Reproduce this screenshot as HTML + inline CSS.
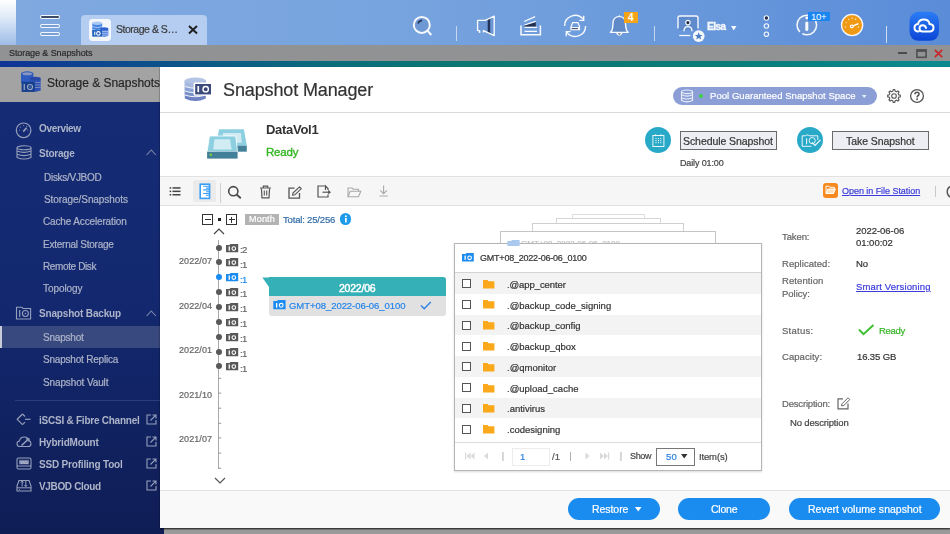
<!DOCTYPE html>
<html><head><meta charset="utf-8">
<style>
*{margin:0;padding:0;box-sizing:border-box}
html,body{width:950px;height:534px;overflow:hidden;font-family:"Liberation Sans",sans-serif;background:#999999;position:relative}
.a{position:absolute}
.tx{position:absolute;white-space:nowrap;will-change:transform;-webkit-text-stroke:0.2px currentColor}
svg{position:absolute;overflow:visible}
</style></head>
<body>
<!-- top bar -->
<div class="a" style="left:0;top:0;width:950px;height:45px;background:linear-gradient(90deg,#80a9e0 0%,#76a3de 45%,#5a8cd8 100%)"></div>
<div class="a" style="left:0;top:0;width:16px;height:45px;background:linear-gradient(180deg,#ffffff 0%,#e3ecf8 35%,#9ebde8 100%)"></div>
<!-- hamburger -->
<div class="a" style="left:40.5px;top:16.1px;width:18px;height:2.2px;border-radius:1.5px;background:#3c4a66;box-shadow:0 0 0 1px #f4f7fc"></div>
<div class="a" style="left:40.5px;top:24.5px;width:18px;height:2.2px;border-radius:1.5px;background:#7aa0d8;box-shadow:0 0 0 1px #f4f7fc"></div>
<div class="a" style="left:40.5px;top:32.9px;width:18px;height:2.2px;border-radius:1.5px;background:#7aa0d8;box-shadow:0 0 0 1px #f4f7fc"></div>
<!-- tab -->
<div class="a" style="left:81px;top:15px;width:126px;height:30px;border-radius:4px 4px 0 0;background:#b4cdf0"></div>
<div class="a" style="left:89px;top:19px;width:22px;height:22px;border-radius:4px;background:#f4f7fb"></div>
<!-- window title bar -->
<div class="a" style="left:0;top:45px;width:950px;height:16px;background:#909294"></div>
<div class="a" style="left:0;top:61px;width:950px;height:6px;background:linear-gradient(90deg,#0f3396 0%,#0c4f8c 15%,#0b6d7c 35%,#0c7870 50%,#0a7c78 75%,#0a8a90 100%)"></div>
<!-- sidebar -->
<div class="a" style="left:0;top:67px;width:164px;height:467px;background:linear-gradient(180deg,#152c76 0%,#13286f 50%,#0f1d55 100%)"></div>
<div class="a" style="left:0;top:67px;width:160px;height:35px;background:#a3a3a3"></div>
<div class="a" style="left:0;top:326px;width:160px;height:22px;background:#38497f"></div>
<div class="a" style="left:0;top:326px;width:2px;height:22px;background:#c8ccd8"></div>
<div class="a" style="left:15px;top:400px;width:145px;height:1px;background:#2a3d7e"></div>
<!-- below modal gray -->
<div class="a" style="left:164px;top:527px;width:786px;height:7px;background:linear-gradient(180deg,#4a4a4a 0px,#7a7a7a 1.5px,#9a9a9a 3px)"></div>
<!-- modal -->
<div class="a" style="left:160px;top:67px;width:790px;height:460.5px;background:#ffffff;box-shadow:0 1px 1.5px rgba(0,0,0,.7)"></div>
<div class="a" style="left:160px;top:112px;width:790px;height:1px;background:#d9d9d9"></div>
<!-- pill -->
<div class="a" style="left:673px;top:87px;width:204px;height:18px;border-radius:9px;background:#8c9ed6"></div>
<div class="a" style="left:698.5px;top:94px;width:4px;height:4px;border-radius:2px;background:#3ecf4a"></div>
<!-- schedule/take buttons -->
<div class="a" style="left:645px;top:127px;width:26px;height:26px;border-radius:13px;background:#28a9c8"></div>
<div class="a" style="left:679.5px;top:131px;width:97px;height:18.6px;background:#eceef3;border:1px solid #6a6a6a"></div>
<div class="a" style="left:797px;top:127px;width:26px;height:26px;border-radius:13px;background:#28a9c8"></div>
<div class="a" style="left:832px;top:131px;width:96.5px;height:18.6px;background:#eceef3;border:1px solid #6a6a6a"></div>
<!-- toolbar -->
<div class="a" style="left:160px;top:176px;width:790px;height:30px;background:#f6f6f6;border-top:1px solid #e2e2e2;border-bottom:1px solid #e2e2e2"></div>
<div class="a" style="left:192.7px;top:180px;width:23px;height:22.4px;border-radius:2px;background:#ebebeb"></div>
<div class="a" style="left:220px;top:183px;width:1px;height:20px;background:#cfcfcf"></div>
<div class="a" style="left:823px;top:182.5px;width:15px;height:15px;border-radius:3px;background:#f7891f"></div>
<div class="a" style="left:934.5px;top:186px;width:1px;height:11px;background:#c8c8c8"></div>
<!-- timeline header -->
<div class="a" style="left:202px;top:214px;width:11px;height:11px;border:1px solid #333"></div>
<div class="a" style="left:204.5px;top:219px;width:6px;height:1px;background:#333"></div>
<div class="a" style="left:218px;top:218px;width:3px;height:3px;background:#222"></div>
<div class="a" style="left:226px;top:214px;width:11px;height:11px;border:1px solid #333"></div>
<div class="a" style="left:228.5px;top:219px;width:6px;height:1px;background:#333"></div>
<div class="a" style="left:231px;top:216.5px;width:1px;height:6px;background:#333"></div>
<div class="a" style="left:245px;top:213.5px;width:33.5px;height:11px;background:#b3b3b3"></div>
<div class="a" style="left:339.5px;top:213.3px;width:11.5px;height:11.5px;border-radius:6px;background:#1c9bea"></div>
<!-- timeline line -->
<div class="a" style="left:218px;top:240px;width:1.3px;height:229px;background:#a9a9a9"></div>
<!-- callout -->
<div class="a" style="left:268.7px;top:277.4px;width:177.5px;height:38.3px;border-radius:0 3px 3px 3px;background:#e1e1e1;overflow:hidden"><div class="a" style="left:0;top:0;width:178px;height:18.5px;background:#34b0b6"></div></div>
<svg style="left:262px;top:277px" width="8" height="11"><path d="M0.4 0.4 H7 V10 Z" fill="#34b0b6"/></svg>
<!-- popup stacked cards -->
<div class="a" style="left:572px;top:214.4px;width:73px;height:40px;border:1px solid #dedede;background:#fff"></div>
<div class="a" style="left:555.5px;top:218.2px;width:105px;height:40px;border:1px solid #d6d6d6;background:#fff"></div>
<div class="a" style="left:532px;top:223px;width:152px;height:40px;border:1px solid #cfcfcf;background:#fff"></div>
<div class="a" style="left:499.5px;top:231px;width:216px;height:40px;border:1px solid #c4c4c4;background:#fff"></div>
<!-- popup main -->
<div class="a" style="left:453.7px;top:243.2px;width:308.5px;height:228px;border:1px solid #b5b5b5;background:#fff;box-shadow:0 1px 2px rgba(0,0,0,.15)"></div>
<div class="a" style="left:454.7px;top:272.3px;width:306.5px;height:1px;background:#d4d4d4"></div>
<div class="a" style="left:454.7px;top:273.3px;width:306.5px;height:20.4px;background:#f3f3f3"></div>
<div class="a" style="left:454.7px;top:314.5px;width:306.5px;height:20.8px;background:#f3f3f3"></div>
<div class="a" style="left:454.7px;top:356.1px;width:306.5px;height:20.8px;background:#f3f3f3"></div>
<div class="a" style="left:454.7px;top:397.6px;width:306.5px;height:20.8px;background:#f3f3f3"></div>
<div class="a" style="left:454.7px;top:442.3px;width:306.5px;height:1px;background:#dcdcdc"></div>
<!-- pager input/select -->
<div class="a" style="left:511.6px;top:447.7px;width:38.5px;height:18px;border:1px solid #ececec;background:#fff"></div>
<div class="a" style="left:656px;top:447.5px;width:39px;height:18.5px;border:1px solid #777;background:#fff"></div>
<!-- footer -->
<div class="a" style="left:160px;top:490px;width:790px;height:37.5px;background:#f9f9f9;border-top:1px solid #e3e3e3"></div>
<div class="a" style="left:567.5px;top:497.7px;width:92.3px;height:22.5px;border-radius:11.25px;background:#1a8cf0"></div>
<div class="a" style="left:678.2px;top:497.7px;width:92px;height:22.5px;border-radius:11.25px;background:#1a8cf0"></div>
<div class="a" style="left:788.7px;top:497.7px;width:151px;height:22.5px;border-radius:11.25px;background:#1a8cf0"></div>
<!-- tab app icon -->
<svg style="left:88.7px;top:18.7px" width="22" height="22" viewBox="0 0 22 22">
<rect x="0" y="0" width="22" height="22" rx="4" fill="#f3f6fb"/>
<path d="M3.3 4.2 V14 H13.2 V4.2 Z" fill="#4584e2"/>
<ellipse cx="8.25" cy="4.2" rx="4.95" ry="1.7" fill="#a9c8f3"/>
<path d="M3.3 7.6 Q8.25 9.6 13.2 7.6 M3.3 10.5 Q8.25 12.5 13.2 10.5" stroke="#c9dcf7" stroke-width="0.7" fill="none"/>
<path d="M11.2 9.8 V16.8 Q15.25 18.9 19.3 16.8 V9.8 Z" fill="#3a6fd9"/>
<ellipse cx="15.25" cy="9.8" rx="4.05" ry="1.5" fill="#2f5fcc"/>
<path d="M12.8 12.3 H19.3 M12.8 14.2 H19.3 M12.8 16.1 H19.3" stroke="#d0def8" stroke-width="0.8"/>
<rect x="3.3" y="11.2" width="9.6" height="6.4" fill="#1b5db9"/>
<rect x="5.2" y="12.6" width="1.1" height="3.6" fill="#fff"/>
<circle cx="9.4" cy="14.4" r="1.75" stroke="#fff" stroke-width="1.1" fill="none"/>
</svg>
<!-- tab close X -->
<svg style="left:187.5px;top:25px" width="10" height="9"><path d="M1 1 L9 8.5 M9 1 L1 8.5" stroke="#1e1e1e" stroke-width="1.9"/></svg>
<!-- search -->
<svg style="left:411px;top:14px" width="24" height="24"><circle cx="10.8" cy="10.9" r="8" stroke="#f6f9fd" stroke-width="2" fill="#6e98d4"/><path d="M16.5 16.6 L20.3 21" stroke="#f6f9fd" stroke-width="2"/><path d="M7 9.5 Q8 6.8 11 6.4" stroke="#24324e" stroke-width="1.6" fill="none"/></svg>
<!-- dividers -->
<div class="a" style="left:455.5px;top:26px;width:1px;height:15px;background:#c5d6ef"></div>
<div class="a" style="left:653.5px;top:26px;width:1px;height:15px;background:#c5d6ef"></div>
<div class="a" style="left:886px;top:26px;width:1px;height:17px;background:#d0def2"></div>
<!-- megaphone -->
<svg style="left:476px;top:15px" width="20" height="22"><path d="M1.6 5.4 H9.2 L18.2 1.2 V20.6 L7.5 15.6 H1.6 Z" fill="#6d98d6"/><path d="M11.7 3.6 L14.2 2.5 V19.2 L11.7 18 Z" fill="#23345a"/><path d="M3.6 18 V15.6 H1.6 V5.4 H9.2 L18.2 1.2 V20.6 L7.5 15.6 V17.6" stroke="#f6f9fd" stroke-width="1.4" fill="none" stroke-linejoin="round"/></svg>
<!-- tray -->
<svg style="left:519px;top:15px" width="23" height="22"><path d="M5.5 10.4 L16.8 6.6 V11.8 H5.5 Z" fill="#22314f"/><path d="M5.1 6.5 L16.1 1.6 M5.5 10 L16.8 6.3 M5.5 12.4 H18 M5.5 16.3 H18" stroke="#f6f9fd" stroke-width="1.3" fill="none"/><path d="M2 10.4 V19.7 H21.4 V10.4" stroke="#f6f9fd" stroke-width="1.5" fill="none"/></svg>
<!-- sync -->
<svg style="left:563px;top:14px" width="25" height="24"><path d="M1.6 12 A10.5 10.5 0 0 1 20.1 5.1" stroke="#f6f9fd" stroke-width="1.4" fill="none"/><path d="M20.7 1.8 V6.4 H16.4" stroke="#f6f9fd" stroke-width="1.4" fill="none"/><path d="M22.6 12 A10.5 10.5 0 0 1 3.7 18.2" stroke="#f6f9fd" stroke-width="1.4" fill="none"/><path d="M3.3 22.2 V17.6 H7.6" stroke="#f6f9fd" stroke-width="1.4" fill="none"/><path d="M7.9 13.3 L9.6 8.6 H15 L16.7 13.3" stroke="#f6f9fd" stroke-width="1.3" fill="none"/><rect x="7.3" y="13" width="9.8" height="3.3" fill="#f6f9fd"/><rect x="8.6" y="14.2" width="6.3" height="0.9" fill="#24324f"/></svg>
<!-- bell -->
<svg style="left:609px;top:14px" width="22" height="24"><path d="M1.5 18.4 Q3.6 16.6 3.8 12 L4 8.6 Q4.5 2.9 10.3 2.4 Q16 2.9 16.5 8.6 L16.7 12 Q17 16.6 19.2 18.4 Z" stroke="#f6f9fd" stroke-width="1.4" fill="#5f89c7" stroke-linejoin="round"/><path d="M9.2 2.6 L10.3 0.9 L11.4 2.6 Z" fill="#f6f9fd"/><path d="M7.5 18.9 Q10.3 23.6 13.1 18.9 Z" stroke="#f6f9fd" stroke-width="1.1" fill="#2a3a5a"/></svg>
<div class="a" style="left:623.6px;top:12px;width:14.4px;height:10.7px;background:#f5a418;color:#fff;font-size:10px;line-height:11px;text-align:center;font-weight:bold">4</div>
<!-- user -->
<svg style="left:676px;top:14px" width="30" height="30"><rect x="2" y="2" width="20" height="14" rx="2" fill="#5f8acb"/><path d="M2 14.6 V4 Q2 2 4 2 H20 Q22 2 22 4 V14.6" stroke="#f6f9fd" stroke-width="1.4" fill="none"/><circle cx="11.9" cy="8.6" r="2.2" stroke="#f6f9fd" stroke-width="1.2" fill="#1c2a48"/><path d="M8 17.3 Q8 12.6 12 12.6 Q16 12.6 16 17.3" stroke="#f6f9fd" stroke-width="1.3" fill="none"/><path d="M3.2 21.5 H14.3" stroke="#f6f9fd" stroke-width="1.3"/><circle cx="22.7" cy="22.1" r="5.9" fill="#f6f9fd"/><path d="M22.7 18.3 L23.8 21 L26.6 21.1 L24.4 22.8 L25.2 25.6 L22.7 24 L20.2 25.6 L21 22.8 L18.8 21.1 L21.6 21 Z" fill="#4d7fc6"/></svg>
<svg style="left:730.5px;top:25.5px" width="6" height="5"><path d="M0 0 H5.5 L2.75 4.5 Z" fill="#f6f9fd"/></svg>
<!-- 3 dots -->
<svg style="left:762px;top:14px" width="9" height="25"><circle cx="4.4" cy="4" r="2.2" fill="#1c2a48" stroke="#f6f9fd" stroke-width="1.1"/><circle cx="4.4" cy="12" r="2.2" fill="none" stroke="#f6f9fd" stroke-width="1.1"/><circle cx="4.4" cy="20.2" r="2.2" fill="none" stroke="#f6f9fd" stroke-width="1.1"/></svg>
<!-- info w/ 10+ -->
<svg style="left:795px;top:13px" width="24" height="24"><circle cx="11.8" cy="12" r="9.8" stroke="#f6f9fd" stroke-width="1.5" fill="#6a94d3" stroke-dasharray="20 3 40 3 40"/><rect x="10.3" y="8.5" width="3" height="9.5" rx="1.5" fill="#f6f9fd"/><circle cx="11.8" cy="5" r="1.4" fill="#f6f9fd"/></svg>
<div class="a" style="left:807.7px;top:12.2px;width:22px;height:9px;background:#1b86ef;color:#fff;font-size:9.5px;line-height:9px;text-align:center;letter-spacing:-0.3px">10+</div>
<!-- orange dashboard -->
<svg style="left:840px;top:13px" width="25" height="25"><circle cx="12.1" cy="12" r="10.6" fill="#f09a14" stroke="#f6f9fd" stroke-width="1.3"/><path d="M11.8 13.4 L18.5 10.6" stroke="#fff" stroke-width="1.5"/><circle cx="11.8" cy="13.4" r="1.9" fill="#fff"/><circle cx="11.8" cy="13.4" r="0.6" fill="#b56a00"/><g fill="#fde9c0"><circle cx="5.5" cy="14" r="0.7"/><circle cx="6.2" cy="9.6" r="0.7"/><circle cx="8.8" cy="6.4" r="0.7"/><circle cx="12.2" cy="5.2" r="0.7"/><circle cx="15.6" cy="6.3" r="0.7"/><circle cx="18.4" cy="14" r="0.7"/></g></svg>
<!-- cloud app -->
<svg style="left:909px;top:10.7px" width="30" height="30"><defs><linearGradient id="cg" x1="0" y1="0" x2="0" y2="1"><stop offset="0" stop-color="#2a7cf5"/><stop offset="1" stop-color="#0b45d6"/></linearGradient></defs><rect x="0.5" y="0.8" width="29.5" height="29" rx="9" fill="url(#cg)"/><path d="M9.5 20.5 Q5.5 20.5 5.5 16.8 Q5.5 13.3 9 13 Q10 8.5 14.8 8.5 Q19.8 8.5 20.6 13 Q24.5 13.2 24.5 16.8 Q24.5 20.5 20.5 20.5 H13.5 Q10.5 20.5 10.5 17.3 Q10.5 14.3 13.8 14.3 Q16.5 14.3 17 17" stroke="#fff" stroke-width="2" fill="none" stroke-linecap="round"/></svg>
<!-- window controls -->
<div class="a" style="left:898px;top:52px;width:9px;height:2px;background:#4b4b4b"></div>
<svg style="left:915.5px;top:48.5px" width="11" height="9"><rect x="0.9" y="0.9" width="9.2" height="7.4" stroke="#505050" stroke-width="1.6" fill="none"/><rect x="0.9" y="0.9" width="9.2" height="2" fill="#505050"/></svg>
<svg style="left:934px;top:48.5px" width="9" height="9"><path d="M0.8 0.8 L8.2 8.2 M8.2 0.8 L0.8 8.2" stroke="#c8272b" stroke-width="1.7"/></svg>

<!-- sidebar header icon -->
<svg style="left:20px;top:70px" width="22" height="23" viewBox="0 0 22 23">
<path d="M1 3.5 V13 H13.4 V3.5 Z" fill="#2f5bc0"/>
<ellipse cx="7.2" cy="3.5" rx="6.2" ry="2.2" fill="#2f5bc0"/>
<ellipse cx="7.2" cy="3.8" rx="4.8" ry="1.5" fill="#8796bd"/>
<path d="M9.8 8.6 V20.5 Q15.25 22.8 20.7 20.5 V8.6 Z" fill="#2d52b4"/>
<ellipse cx="15.25" cy="8.6" rx="5.45" ry="1.9" fill="#2848a8"/>
<path d="M14.8 12.5 H20.7 M14.8 15 H20.7 M14.8 17.5 H20.7" stroke="#8996bd" stroke-width="0.8"/>
<rect x="1.6" y="11.8" width="13.2" height="10.1" fill="#163f8e"/>
<rect x="3.6" y="14" width="1.3" height="6" fill="#9aa4c0"/>
<circle cx="10" cy="17" r="2.5" stroke="#9aa4c0" stroke-width="1.2" fill="none"/>
<circle cx="10" cy="17" r="0.6" fill="#9aa4c0"/>
</svg>
<!-- sidebar icons -->
<svg style="left:14px;top:121px" width="20" height="20"><circle cx="9.6" cy="9.3" r="7.3" stroke="#97a0bb" stroke-width="1.2" fill="none"/><path d="M9.2 10.6 L12.6 6.8" stroke="#97a0bb" stroke-width="1.6"/><g fill="#97a0bb"><circle cx="5.5" cy="9" r="0.55"/><circle cx="6.6" cy="6" r="0.55"/><circle cx="9.6" cy="4.5" r="0.55"/><circle cx="12.7" cy="5.6" r="0.55"/><circle cx="13.8" cy="9" r="0.55"/></g></svg>
<svg style="left:15px;top:145px" width="18" height="16"><path d="M2 2.8 V12.4 Q9 15.5 16 12.4 V2.8" stroke="#97a0bb" stroke-width="1.1" fill="none"/><ellipse cx="9" cy="2.8" rx="7" ry="2" stroke="#97a0bb" stroke-width="1.1" fill="none"/><path d="M2 6 Q9 8.8 16 6 M2 9.2 Q9 12 16 9.2" stroke="#97a0bb" stroke-width="1.1" fill="none"/></svg>
<svg style="left:145.5px;top:149px" width="11" height="7"><path d="M0.6 6 L5.25 1 L9.9 6" stroke="#7d88a8" stroke-width="1.1" fill="none"/></svg>
<svg style="left:15px;top:306px" width="18" height="14"><path d="M1.5 1.2 H7 L8 2.5 H15.6 V13 H1.5 Z" stroke="#97a0bb" stroke-width="1.1" fill="none"/><path d="M4.7 4 V11" stroke="#97a0bb" stroke-width="1.2"/><circle cx="10.4" cy="7.5" r="3" stroke="#97a0bb" stroke-width="1.1" fill="none"/><circle cx="10.4" cy="7.5" r="0.8" fill="#97a0bb"/></svg>
<svg style="left:145.5px;top:310px" width="11" height="7"><path d="M0.6 6 L5.25 1 L9.9 6" stroke="#7d88a8" stroke-width="1.1" fill="none"/></svg>
<svg style="left:16px;top:413px" width="16" height="13"><path d="M6.5 1 L1.2 6.3 L6.5 11.6" stroke="#97a0bb" stroke-width="1.2" fill="none"/><path d="M6.5 1 L9 3.5 M6.5 11.6 L9 9.1" stroke="#97a0bb" stroke-width="1.2"/><path d="M9 6.3 H14.5" stroke="#97a0bb" stroke-width="1.2"/></svg>
<svg style="left:16px;top:435px" width="16" height="13"><path d="M4 11.5 Q1 11.5 1 8.7 Q1 6.3 3.5 6 Q4.2 2 8.2 2 Q12 2 12.8 5.5 Q15 6.2 15 8.7 Q15 11.5 12 11.5 Z" stroke="#97a0bb" stroke-width="1.1" fill="none"/><path d="M5.5 10.5 L12.5 4" stroke="#97a0bb" stroke-width="1.6"/><path d="M10 3.8 H13 V6.8" stroke="#97a0bb" stroke-width="1.2" fill="none"/></svg>
<svg style="left:16px;top:457px" width="16" height="13"><rect x="1" y="1" width="14" height="11" rx="1.5" stroke="#97a0bb" stroke-width="1.1" fill="none"/><rect x="3" y="2.8" width="10" height="4.5" fill="#6f7a9c"/><path d="M1 9 H15" stroke="#97a0bb" stroke-width="1"/><text x="8" y="6.6" font-size="4" text-anchor="middle" fill="#c5cbe0" font-family="Liberation Sans" font-weight="bold">SSD</text></svg>
<svg style="left:16px;top:479px" width="16" height="13"><path d="M1 7 L3 1.5 H13 L15 7 V12 H1 Z" stroke="#97a0bb" stroke-width="1.1" fill="none"/><path d="M1 8.8 H15" stroke="#97a0bb" stroke-width="1"/><path d="M6.2 7.5 V2 M4.8 3.5 L6.2 2 L7.6 3.5 M9.8 2 V7.5 M8.4 6 L9.8 7.5 L11.2 6" stroke="#97a0bb" stroke-width="1" fill="none"/><circle cx="3.5" cy="10.5" r="0.6" fill="#97a0bb"/></svg>
<svg style="left:145.5px;top:414px" width="11" height="11"><path d="M5 1 H1 V10 H10 V6" stroke="#97a0bb" stroke-width="1.1" fill="none"/><path d="M4.5 6.5 L9.8 1.2 M6.5 1 H10 V4.5" stroke="#97a0bb" stroke-width="1.1" fill="none"/></svg>
<svg style="left:145.5px;top:436px" width="11" height="11"><path d="M5 1 H1 V10 H10 V6" stroke="#97a0bb" stroke-width="1.1" fill="none"/><path d="M4.5 6.5 L9.8 1.2 M6.5 1 H10 V4.5" stroke="#97a0bb" stroke-width="1.1" fill="none"/></svg>
<svg style="left:145.5px;top:458px" width="11" height="11"><path d="M5 1 H1 V10 H10 V6" stroke="#97a0bb" stroke-width="1.1" fill="none"/><path d="M4.5 6.5 L9.8 1.2 M6.5 1 H10 V4.5" stroke="#97a0bb" stroke-width="1.1" fill="none"/></svg>
<svg style="left:145.5px;top:480px" width="11" height="11"><path d="M5 1 H1 V10 H10 V6" stroke="#97a0bb" stroke-width="1.1" fill="none"/><path d="M4.5 6.5 L9.8 1.2 M6.5 1 H10 V4.5" stroke="#97a0bb" stroke-width="1.1" fill="none"/></svg>

<!-- modal header icon -->
<svg style="left:184px;top:77px" width="30" height="26" viewBox="0 0 30 26">
<path d="M0.8 3.5 V21.5 Q11.3 26.5 21.8 21.5 V3.5 Z" fill="#6c80c2"/>
<path d="M0.8 3.5 V9.5 Q11.3 13 21.8 9.5 V3.5 Z" fill="#a6b9df"/>
<ellipse cx="11.3" cy="3.5" rx="10.5" ry="3" fill="#b4c4e4"/>
<path d="M0.8 9.5 V14 Q11.3 17.5 21.8 14 V9.5 Q11.3 13 0.8 9.5 Z" fill="#8aa2d5"/>
<path d="M0.8 14 V18 Q11.3 21.5 21.8 18 V14 Q11.3 17.5 0.8 14 Z" fill="#7990cb"/>
<path d="M0.8 9.5 Q11.3 13 21.8 9.5 M0.8 14 Q11.3 17.5 21.8 14 M0.8 18 Q11.3 21.5 21.8 18" stroke="#ffffff" stroke-width="0.9" fill="none"/>
<rect x="9.6" y="5.6" width="19" height="13.2" rx="1.5" fill="#ffffff"/>
<rect x="11.2" y="7" width="15.8" height="10.4" fill="#3a4a7c"/>
<rect x="13.4" y="9" width="1.7" height="6.2" fill="#fff"/>
<circle cx="21.7" cy="12.2" r="2.7" stroke="#fff" stroke-width="1.4" fill="none"/>
</svg>
<!-- disk icon -->
<svg style="left:206px;top:128px" width="42" height="32" viewBox="0 0 42 32">
<path d="M13.1 1.2 H37.9 L40.8 17.7 H10 Z" fill="#8ccfe0"/>
<path d="M17 5 H34.9 L35.8 14.7 H16 Z" fill="#d0ebf2"/>
<rect x="10" y="17.7" width="30.8" height="6" fill="#44829b"/>
<path d="M3.5 8 H29.7 L31.6 23.7 H1.1 Z" fill="#8ccfe0" stroke="#ffffff" stroke-width="0.8"/>
<path d="M8.4 11.3 H24 L25.6 21.4 H7.2 Z" fill="#d2ecf3"/>
<rect x="1.1" y="23.7" width="30.5" height="6.9" fill="#427f98"/>
<circle cx="4.8" cy="26.7" r="1.2" fill="#7ed22e"/>
</svg>
<!-- pill db + caret -->
<svg style="left:679.5px;top:88.5px" width="14" height="15"><path d="M1.5 2.8 V11.6 Q7 14.2 12.5 11.6 V2.8" stroke="#e9eefa" stroke-width="1.1" fill="none"/><ellipse cx="7" cy="2.8" rx="5.5" ry="1.8" stroke="#e9eefa" stroke-width="1.1" fill="none"/><path d="M1.5 5.8 Q7 8.4 12.5 5.8 M1.5 8.7 Q7 11.3 12.5 8.7" stroke="#e9eefa" stroke-width="1.1" fill="none"/></svg>
<svg style="left:861.5px;top:94.5px" width="5" height="4"><path d="M0 0 H4.4 L2.2 3 Z" fill="#eef2fb"/></svg>
<!-- gear -->
<svg style="left:886.2px;top:87.6px" width="16" height="16"><path d="M12.76 6.86 L14.34 7.15 L14.34 8.85 L12.76 9.14 L12.18 10.56 L13.09 11.88 L11.88 13.09 L10.56 12.18 L9.14 12.76 L8.85 14.34 L7.15 14.34 L6.86 12.76 L5.44 12.18 L4.12 13.09 L2.91 11.88 L3.82 10.56 L3.24 9.14 L1.66 8.85 L1.66 7.15 L3.24 6.86 L3.82 5.44 L2.91 4.12 L4.12 2.91 L5.44 3.82 L6.86 3.24 L7.15 1.66 L8.85 1.66 L9.14 3.24 L10.56 3.82 L11.88 2.91 L13.09 4.12 L12.18 5.44 Z" stroke="#5a5a5a" stroke-width="1.15" fill="none" stroke-linejoin="round"/><circle cx="8" cy="8" r="2.3" stroke="#5a5a5a" stroke-width="1.1" fill="none"/></svg>
<!-- help -->
<svg style="left:908.8px;top:87.6px" width="16" height="16"><circle cx="8" cy="8" r="6.4" stroke="#555" stroke-width="1.3" fill="none"/><path d="M6 6.2 Q6 4.2 8 4.2 Q10 4.2 10 6 Q10 7.1 8.9 7.7 Q8.1 8.2 8.1 9.4" stroke="#555" stroke-width="1.6" fill="none"/><circle cx="8.1" cy="11.3" r="0.95" fill="#555"/></svg>
<!-- calendar in circle -->
<svg style="left:652px;top:134px" width="13" height="13"><rect x="0.9" y="1.5" width="11" height="11" stroke="#eaf6fa" stroke-width="1" fill="none"/><path d="M3.6 0.3 V2.2 M9 0.3 V2.2" stroke="#eaf6fa" stroke-width="1"/><path d="M4 4 V10 M6.4 4 V10 M8.8 4 V10" stroke="#eaf6fa" stroke-width="1" stroke-dasharray="1.2 0.8"/></svg>
<!-- snapshot in circle -->
<svg style="left:801px;top:134px" width="21" height="14"><path d="M1.2 1.8 H4.5 L5.3 1 H7.5 L8.2 1.8 H16.8 V6.2" stroke="#eaf6fa" stroke-width="1" fill="none"/><path d="M1.2 1.8 V12.3 H10.5" stroke="#eaf6fa" stroke-width="1" fill="none"/><path d="M5.6 4.3 V10.3" stroke="#eaf6fa" stroke-width="1.1"/><circle cx="11.2" cy="6.6" r="3.1" stroke="#eaf6fa" stroke-width="1" fill="none"/><path d="M11 8.6 L14 11.4 L19.6 5.9" stroke="#eaf6fa" stroke-width="1.3" fill="none"/></svg>
<!-- toolbar icons -->
<svg style="left:169px;top:186px" width="13" height="11"><g fill="#444"><rect x="0.6" y="1.2" width="1.6" height="1.5"/><rect x="0.6" y="4.6" width="1.6" height="1.5"/><rect x="0.6" y="8" width="1.6" height="1.5"/><rect x="3.5" y="1.2" width="8" height="1.5"/><rect x="3.5" y="4.6" width="8" height="1.5"/><rect x="3.5" y="8" width="8" height="1.5"/></g></svg>
<svg style="left:199px;top:183px" width="12" height="17"><rect x="1.2" y="1.2" width="9.4" height="14.2" stroke="#3a9ff4" stroke-width="1.6" fill="#fff"/><path d="M4.2 3.3 H10 M7 5.1 H10 M4.2 6.9 H10 M7 8.7 H10 M4.2 10.5 H10 M7 12.3 H10" stroke="#3a9ff4" stroke-width="1.1"/></svg>
<svg style="left:227px;top:185px" width="15" height="14"><circle cx="6.3" cy="6.2" r="4.6" stroke="#4a4a4a" stroke-width="1.6" fill="none"/><path d="M9.6 9.5 L13.8 13.2" stroke="#4a4a4a" stroke-width="1.8"/></svg>
<svg style="left:258.5px;top:184.5px" width="13" height="14"><path d="M1 3 H12 M4.3 3 V1.2 H8.7 V3" stroke="#555" stroke-width="1.2" fill="none"/><path d="M2.4 3.5 L3 12.8 H10 L10.6 3.5" stroke="#555" stroke-width="1.2" fill="none"/><path d="M5.3 5.5 V10.5 M7.7 5.5 V10.5" stroke="#555" stroke-width="1.1"/></svg>
<svg style="left:287.5px;top:185.5px" width="15" height="13"><path d="M6.5 2.2 H1 V12.2 H11.5 V7" stroke="#555" stroke-width="1.3" fill="none"/><path d="M4.5 9.2 L5 7 L11.5 0.8 L13.3 2.6 L6.8 8.8 Z" stroke="#555" stroke-width="1.1" fill="none" stroke-linejoin="round"/></svg>
<svg style="left:317px;top:185px" width="15" height="13"><path d="M8.5 5 V1 L11 3.5 V5 M11 9.5 V12 H1 V1 H8.5" stroke="#555" stroke-width="1.2" fill="none"/><path d="M5.5 7.2 H12" stroke="#555" stroke-width="1.2"/><path d="M11.2 4.8 L14 7.2 L11.2 9.6 Z" fill="#555"/></svg>
<svg style="left:346.5px;top:186.5px" width="15" height="11"><path d="M1 9.8 V1 H5 L6 2.2 H11.5 V4.2" stroke="#a9a9a9" stroke-width="1.1" fill="none"/><path d="M1 9.8 L3.2 4.2 H13.8 L11.5 9.8 Z" stroke="#a9a9a9" stroke-width="1.1" fill="none"/></svg>
<svg style="left:378.5px;top:185px" width="10" height="12"><path d="M4.6 0.5 V8.5 M1.2 5.3 L4.6 8.7 L8 5.3 M0.5 11 H8.8" stroke="#a9a9a9" stroke-width="1.1" fill="none"/></svg>
<!-- open in file station folder glyph -->
<svg style="left:825px;top:185px" width="11" height="10"><path d="M1 8.5 V1.2 H4 L5 2.3 H9.3 V4" stroke="#fff" stroke-width="1" fill="none"/><path d="M1 8.5 L2.8 4 H10.4 L8.6 8.5 Z" stroke="#fff" stroke-width="1" fill="#fde1bd"/></svg>
<!-- refresh partial -->
<svg style="left:943px;top:184px" width="10" height="16"><path d="M8.5 2 A6 6 0 0 0 8.5 13.5" stroke="#555" stroke-width="1.4" fill="none"/></svg>
<!-- info i -->
<svg style="left:339.5px;top:213.3px" width="12" height="12"><rect x="5" y="5" width="1.7" height="4.5" fill="#fff"/><circle cx="5.85" cy="3.2" r="0.95" fill="#fff"/></svg>
<!-- chevrons -->
<svg style="left:213px;top:228px" width="12" height="7"><path d="M1 6 L6 1 L11 6" stroke="#444" stroke-width="1.2" fill="none"/></svg>
<svg style="left:213.5px;top:476.5px" width="12" height="7"><path d="M1 1 L6 6 L11 1" stroke="#555" stroke-width="1.2" fill="none"/></svg>
<!-- ticks -->
<svg style="left:217px;top:375px" width="6" height="96"><g stroke="#999" stroke-width="1"><path d="M1 3.3 H4.2 M1 18.1 H4.2 M1 33.2 H4.2 M1 48.3 H4.2 M1 62.9 H4.2 M1 78.1 H4.2 M1 93.2 H4.2"/></g></svg>
<!-- timeline dots & icons -->
<div class="a" style="left:215.9px;top:244.60px;width:6px;height:6px;border-radius:3px;background:#595959"></div>
<svg style="left:226px;top:243.60px" width="13" height="9"><path d="M0 1 H3.5 L4.5 0 H12.2 V8.3 H0 Z" fill="#595959"/><rect x="2.6" y="2.4" width="1.3" height="4.4" fill="#fff"/><circle cx="7.8" cy="4.6" r="1.8" stroke="#fff" stroke-width="1.1" fill="none"/></svg>
<div class="a" style="left:215.9px;top:259.46px;width:6px;height:6px;border-radius:3px;background:#595959"></div>
<svg style="left:226px;top:258.46px" width="13" height="9"><path d="M0 1 H3.5 L4.5 0 H12.2 V8.3 H0 Z" fill="#595959"/><rect x="2.6" y="2.4" width="1.3" height="4.4" fill="#fff"/><circle cx="7.8" cy="4.6" r="1.8" stroke="#fff" stroke-width="1.1" fill="none"/></svg>
<div class="a" style="left:215.9px;top:274.32px;width:6px;height:6px;border-radius:3px;background:#1a8cf0"></div>
<svg style="left:226px;top:273.32px" width="13" height="9"><path d="M0 1 H3.5 L4.5 0 H12.2 V8.3 H0 Z" fill="#1a8cf0"/><rect x="2.6" y="2.4" width="1.3" height="4.4" fill="#fff"/><circle cx="7.8" cy="4.6" r="1.8" stroke="#fff" stroke-width="1.1" fill="none"/></svg>
<div class="a" style="left:215.9px;top:289.18px;width:6px;height:6px;border-radius:3px;background:#595959"></div>
<svg style="left:226px;top:288.18px" width="13" height="9"><path d="M0 1 H3.5 L4.5 0 H12.2 V8.3 H0 Z" fill="#595959"/><rect x="2.6" y="2.4" width="1.3" height="4.4" fill="#fff"/><circle cx="7.8" cy="4.6" r="1.8" stroke="#fff" stroke-width="1.1" fill="none"/></svg>
<div class="a" style="left:215.9px;top:304.04px;width:6px;height:6px;border-radius:3px;background:#595959"></div>
<svg style="left:226px;top:303.04px" width="13" height="9"><path d="M0 1 H3.5 L4.5 0 H12.2 V8.3 H0 Z" fill="#595959"/><rect x="2.6" y="2.4" width="1.3" height="4.4" fill="#fff"/><circle cx="7.8" cy="4.6" r="1.8" stroke="#fff" stroke-width="1.1" fill="none"/></svg>
<div class="a" style="left:215.9px;top:318.90px;width:6px;height:6px;border-radius:3px;background:#595959"></div>
<svg style="left:226px;top:317.90px" width="13" height="9"><path d="M0 1 H3.5 L4.5 0 H12.2 V8.3 H0 Z" fill="#595959"/><rect x="2.6" y="2.4" width="1.3" height="4.4" fill="#fff"/><circle cx="7.8" cy="4.6" r="1.8" stroke="#fff" stroke-width="1.1" fill="none"/></svg>
<div class="a" style="left:215.9px;top:333.76px;width:6px;height:6px;border-radius:3px;background:#595959"></div>
<svg style="left:226px;top:332.76px" width="13" height="9"><path d="M0 1 H3.5 L4.5 0 H12.2 V8.3 H0 Z" fill="#595959"/><rect x="2.6" y="2.4" width="1.3" height="4.4" fill="#fff"/><circle cx="7.8" cy="4.6" r="1.8" stroke="#fff" stroke-width="1.1" fill="none"/></svg>
<div class="a" style="left:215.9px;top:348.62px;width:6px;height:6px;border-radius:3px;background:#595959"></div>
<svg style="left:226px;top:347.62px" width="13" height="9"><path d="M0 1 H3.5 L4.5 0 H12.2 V8.3 H0 Z" fill="#595959"/><rect x="2.6" y="2.4" width="1.3" height="4.4" fill="#fff"/><circle cx="7.8" cy="4.6" r="1.8" stroke="#fff" stroke-width="1.1" fill="none"/></svg>
<div class="a" style="left:215.9px;top:363.48px;width:6px;height:6px;border-radius:3px;background:#595959"></div>
<svg style="left:226px;top:362.48px" width="13" height="9"><path d="M0 1 H3.5 L4.5 0 H12.2 V8.3 H0 Z" fill="#595959"/><rect x="2.6" y="2.4" width="1.3" height="4.4" fill="#fff"/><circle cx="7.8" cy="4.6" r="1.8" stroke="#fff" stroke-width="1.1" fill="none"/></svg>
<!-- callout icon + check -->
<svg style="left:272.5px;top:300px" width="13" height="10"><path d="M0.3 1 H4 L5 0 H12.6 V9.2 H0.3 Z" fill="#1d8cf0"/><rect x="3" y="3" width="1.3" height="4.6" fill="#fff"/><circle cx="8.2" cy="5.3" r="1.9" stroke="#fff" stroke-width="1.1" fill="none"/></svg>
<svg style="left:419.5px;top:300.5px" width="12" height="9"><path d="M1 4.5 L4.2 7.8 L10.8 1" stroke="#2a7fe0" stroke-width="1.3" fill="none"/></svg>
<!-- faint card text -->
<svg style="left:507px;top:240px" width="13" height="3.2"><path d="M0.3 1 H4 L5 0 H12.6 V6 H0.3 Z" fill="#a9c9ee"/></svg>
<div class="tx" style="left:521px;top:240px;font-size:8px;line-height:8px;color:#c0c0c0;height:3px;overflow:hidden">GMT+08_2022-06-06_0100</div>
<!-- popup title icon -->
<svg style="left:462px;top:253px" width="12" height="9"><path d="M0 1 H3.5 L4.5 0 H11.8 V8.6 H0 Z" fill="#1d8cf0"/><rect x="2.5" y="2.6" width="1.3" height="4.2" fill="#fff"/><circle cx="7.6" cy="4.8" r="1.8" stroke="#fff" stroke-width="1.1" fill="none"/></svg>
<div class="a" style="left:462.2px;top:279.30px;width:9px;height:9px;border:1px solid #555;background:#fff"></div>
<svg style="left:483px;top:279.60px" width="12" height="9"><path d="M0 0 H4.5 L5.5 1.2 H11.4 V8.6 H0 Z" fill="#fba81b"/></svg>
<div class="a" style="left:462.2px;top:300.08px;width:9px;height:9px;border:1px solid #555;background:#fff"></div>
<svg style="left:483px;top:300.38px" width="12" height="9"><path d="M0 0 H4.5 L5.5 1.2 H11.4 V8.6 H0 Z" fill="#fba81b"/></svg>
<div class="a" style="left:462.2px;top:320.86px;width:9px;height:9px;border:1px solid #555;background:#fff"></div>
<svg style="left:483px;top:321.16px" width="12" height="9"><path d="M0 0 H4.5 L5.5 1.2 H11.4 V8.6 H0 Z" fill="#fba81b"/></svg>
<div class="a" style="left:462.2px;top:341.64px;width:9px;height:9px;border:1px solid #555;background:#fff"></div>
<svg style="left:483px;top:341.94px" width="12" height="9"><path d="M0 0 H4.5 L5.5 1.2 H11.4 V8.6 H0 Z" fill="#fba81b"/></svg>
<div class="a" style="left:462.2px;top:362.42px;width:9px;height:9px;border:1px solid #555;background:#fff"></div>
<svg style="left:483px;top:362.72px" width="12" height="9"><path d="M0 0 H4.5 L5.5 1.2 H11.4 V8.6 H0 Z" fill="#fba81b"/></svg>
<div class="a" style="left:462.2px;top:383.20px;width:9px;height:9px;border:1px solid #555;background:#fff"></div>
<svg style="left:483px;top:383.50px" width="12" height="9"><path d="M0 0 H4.5 L5.5 1.2 H11.4 V8.6 H0 Z" fill="#fba81b"/></svg>
<div class="a" style="left:462.2px;top:403.98px;width:9px;height:9px;border:1px solid #555;background:#fff"></div>
<svg style="left:483px;top:404.28px" width="12" height="9"><path d="M0 0 H4.5 L5.5 1.2 H11.4 V8.6 H0 Z" fill="#fba81b"/></svg>
<div class="a" style="left:462.2px;top:424.76px;width:9px;height:9px;border:1px solid #555;background:#fff"></div>
<svg style="left:483px;top:425.06px" width="12" height="9"><path d="M0 0 H4.5 L5.5 1.2 H11.4 V8.6 H0 Z" fill="#fba81b"/></svg>
<!-- pager -->
<svg style="left:464px;top:451px" width="160" height="11"><g fill="#dadada"><rect x="1" y="1.5" width="1.2" height="7"/><path d="M6.5 1.5 V8.5 L2.6 5 Z M10.5 1.5 V8.5 L6.6 5 Z"/><path d="M24 1.5 V8.5 L20 5 Z"/><path d="M121.5 1.5 V8.5 L125.5 5 Z"/><path d="M136 1.5 V8.5 L140 5 Z M140 1.5 V8.5 L144 5 Z"/><rect x="144" y="1.5" width="1.2" height="7"/></g><g fill="#a8a8a8"><rect x="38.5" y="1" width="0.9" height="9"/><rect x="106" y="1" width="0.9" height="9"/><rect x="156.5" y="1" width="0.9" height="9"/></g></svg>
<svg style="left:680.5px;top:454px" width="7" height="5"><path d="M0 0 H6.5 L3.25 4.5 Z" fill="#333"/></svg>
<!-- status check -->
<svg style="left:858px;top:324px" width="17" height="12"><path d="M1 5.5 L5.5 10.2 L15.5 1" stroke="#3dbf2f" stroke-width="2" fill="none"/></svg>
<!-- description edit -->
<svg style="left:837px;top:396.5px" width="14" height="13"><path d="M6 1.8 H1 V11.8 H11 V6.5" stroke="#666" stroke-width="1.2" fill="none"/><path d="M4.5 8.8 L5 6.8 L11 0.8 L12.8 2.6 L6.8 8.5 Z" stroke="#666" stroke-width="1" fill="none" stroke-linejoin="round"/></svg>
<!-- restore caret -->
<svg style="left:634.5px;top:506.5px" width="7" height="5"><path d="M0 0 H6.5 L3.25 4.5 Z" fill="#fff"/></svg>

<div class="tx" style="left:116.00px;top:23.71px;font-size:10.5px;line-height:10.5px;color:#3b3b3b;letter-spacing:-0.474px;">Storage &amp; S…</div>
<div class="tx" style="left:707.00px;top:21.21px;font-size:10.5px;line-height:10.5px;color:#f4f7fc;font-weight:bold;-webkit-text-stroke:0;letter-spacing:-0.853px;-webkit-text-stroke:0.3px #f4f7fc">Elsa</div>
<div class="tx" style="left:9.00px;top:48.58px;font-size:9px;line-height:9px;color:#2b2b2b;letter-spacing:-0.086px;">Storage &amp; Snapshots</div>
<div class="tx" style="left:47.00px;top:76.64px;font-size:12px;line-height:12px;color:#262626;letter-spacing:-0.023px;">Storage &amp; Snapshots</div>
<div class="tx" style="left:38.80px;top:123.93px;font-size:10px;line-height:10px;color:#adb4c8;font-weight:bold;-webkit-text-stroke:0;letter-spacing:-0.342px;">Overview</div>
<div class="tx" style="left:38.80px;top:149.03px;font-size:10px;line-height:10px;color:#adb4c8;font-weight:bold;-webkit-text-stroke:0;letter-spacing:-0.245px;">Storage</div>
<div class="tx" style="left:43.50px;top:173.03px;font-size:10px;line-height:10px;color:#adb4c8;letter-spacing:-0.284px;">Disks/VJBOD</div>
<div class="tx" style="left:43.50px;top:195.14px;font-size:10px;line-height:10px;color:#adb4c8;letter-spacing:-0.066px;">Storage/Snapshots</div>
<div class="tx" style="left:43.30px;top:217.03px;font-size:10px;line-height:10px;color:#adb4c8;letter-spacing:-0.144px;">Cache Acceleration</div>
<div class="tx" style="left:43.30px;top:239.53px;font-size:10px;line-height:10px;color:#adb4c8;letter-spacing:-0.242px;">External Storage</div>
<div class="tx" style="left:43.30px;top:261.64px;font-size:10px;line-height:10px;color:#adb4c8;letter-spacing:-0.374px;">Remote Disk</div>
<div class="tx" style="left:43.30px;top:283.84px;font-size:10px;line-height:10px;color:#adb4c8;letter-spacing:-0.076px;">Topology</div>
<div class="tx" style="left:38.80px;top:308.94px;font-size:10px;line-height:10px;color:#adb4c8;font-weight:bold;-webkit-text-stroke:0;letter-spacing:-0.168px;">Snapshot Backup</div>
<div class="tx" style="left:43.30px;top:332.74px;font-size:10px;line-height:10px;color:#adb4c8;letter-spacing:-0.211px;">Snapshot</div>
<div class="tx" style="left:43.30px;top:355.24px;font-size:10px;line-height:10px;color:#adb4c8;letter-spacing:-0.208px;">Snapshot Replica</div>
<div class="tx" style="left:43.30px;top:377.64px;font-size:10px;line-height:10px;color:#adb4c8;letter-spacing:-0.124px;">Snapshot Vault</div>
<div class="tx" style="left:38.80px;top:415.84px;font-size:10px;line-height:10px;color:#adb4c8;font-weight:bold;-webkit-text-stroke:0;letter-spacing:-0.240px;">iSCSI &amp; Fibre Channel</div>
<div class="tx" style="left:38.80px;top:437.84px;font-size:10px;line-height:10px;color:#adb4c8;font-weight:bold;-webkit-text-stroke:0;letter-spacing:-0.183px;">HybridMount</div>
<div class="tx" style="left:38.80px;top:459.84px;font-size:10px;line-height:10px;color:#adb4c8;font-weight:bold;-webkit-text-stroke:0;letter-spacing:-0.191px;">SSD Profiling Tool</div>
<div class="tx" style="left:38.80px;top:481.84px;font-size:10px;line-height:10px;color:#adb4c8;font-weight:bold;-webkit-text-stroke:0;letter-spacing:-0.345px;">VJBOD Cloud</div>
<div class="tx" style="left:222.80px;top:81.06px;font-size:18px;line-height:18px;color:#333;letter-spacing:-0.127px;">Snapshot Manager</div>
<div class="tx" style="left:709.60px;top:91.46px;font-size:9.5px;line-height:9.5px;color:#ffffff;letter-spacing:0.045px;">Pool Guaranteed Snapshot Space</div>
<div class="tx" style="left:266.30px;top:123.30px;font-size:13px;line-height:13px;color:#333;font-weight:bold;-webkit-text-stroke:0;letter-spacing:-0.291px;">DataVol1</div>
<div class="tx" style="left:266.30px;top:146.97px;font-size:11.5px;line-height:11.5px;color:#33b522;letter-spacing:-0.198px;-webkit-text-stroke:0.35px #33b522">Ready</div>
<div class="tx" style="left:683.00px;top:136.01px;font-size:10.5px;line-height:10.5px;color:#333;letter-spacing:-0.072px;">Schedule Snapshot</div>
<div class="tx" style="left:845.80px;top:136.01px;font-size:10.5px;line-height:10.5px;color:#333;letter-spacing:-0.062px;">Take Snapshot</div>
<div class="tx" style="left:680.00px;top:158.68px;font-size:9px;line-height:9px;color:#444;letter-spacing:-0.132px;">Daily 01:00</div>
<div class="tx" style="left:841.80px;top:187.38px;font-size:9px;line-height:9px;color:#3b3bdc;letter-spacing:-0.044px;text-decoration:underline">Open in File Station</div>
<div class="tx" style="left:248.60px;top:214.98px;font-size:9px;line-height:9px;color:#ffffff;letter-spacing:0.198px;">Month</div>
<div class="tx" style="left:283.00px;top:214.56px;font-size:9.5px;line-height:9.5px;color:#336ca8;letter-spacing:-0.177px;">Total: 25/256</div>
<div class="tx" style="left:178.80px;top:257.08px;font-size:9px;line-height:9px;color:#666;letter-spacing:0.079px;">2022/07</div>
<div class="tx" style="left:178.80px;top:302.08px;font-size:9px;line-height:9px;color:#666;letter-spacing:0.079px;">2022/04</div>
<div class="tx" style="left:178.80px;top:346.38px;font-size:9px;line-height:9px;color:#666;letter-spacing:0.079px;">2022/01</div>
<div class="tx" style="left:178.80px;top:390.68px;font-size:9px;line-height:9px;color:#666;letter-spacing:0.079px;">2021/10</div>
<div class="tx" style="left:178.80px;top:435.08px;font-size:9px;line-height:9px;color:#666;letter-spacing:0.079px;">2021/07</div>
<div class="tx" style="left:240.30px;top:244.86px;font-size:9.5px;line-height:9.5px;color:#666;letter-spacing:-0.539px;">:2</div>
<div class="tx" style="left:240.30px;top:259.72px;font-size:9.5px;line-height:9.5px;color:#666;letter-spacing:-0.539px;">:1</div>
<div class="tx" style="left:240.30px;top:274.58px;font-size:9.5px;line-height:9.5px;color:#1a8cf0;letter-spacing:-0.539px;">:1</div>
<div class="tx" style="left:240.30px;top:289.44px;font-size:9.5px;line-height:9.5px;color:#666;letter-spacing:-0.539px;">:1</div>
<div class="tx" style="left:240.30px;top:304.30px;font-size:9.5px;line-height:9.5px;color:#666;letter-spacing:-0.539px;">:1</div>
<div class="tx" style="left:240.30px;top:319.16px;font-size:9.5px;line-height:9.5px;color:#666;letter-spacing:-0.539px;">:1</div>
<div class="tx" style="left:240.30px;top:334.02px;font-size:9.5px;line-height:9.5px;color:#666;letter-spacing:-0.539px;">:1</div>
<div class="tx" style="left:240.30px;top:348.88px;font-size:9.5px;line-height:9.5px;color:#666;letter-spacing:-0.539px;">:1</div>
<div class="tx" style="left:240.30px;top:363.74px;font-size:9.5px;line-height:9.5px;color:#666;letter-spacing:-0.539px;">:1</div>
<div class="tx" style="left:339.20px;top:283.01px;font-size:10.5px;line-height:10.5px;color:#ffffff;letter-spacing:-0.219px;-webkit-text-stroke:0.45px #fff">2022/06</div>
<div class="tx" style="left:288.70px;top:301.06px;font-size:9.5px;line-height:9.5px;color:#2585ea;letter-spacing:-0.049px;">GMT+08_2022-06-06_0100</div>
<div class="tx" style="left:480.40px;top:253.78px;font-size:9px;line-height:9px;color:#333;letter-spacing:-0.216px;">GMT+08_2022-06-06_0100</div>
<div class="tx" style="left:506.90px;top:279.76px;font-size:9.5px;line-height:9.5px;color:#333;letter-spacing:-0.087px;">.@app_center</div>
<div class="tx" style="left:506.90px;top:300.54px;font-size:9.5px;line-height:9.5px;color:#333;">.@backup_code_signing</div>
<div class="tx" style="left:506.90px;top:321.32px;font-size:9.5px;line-height:9.5px;color:#333;">.@backup_config</div>
<div class="tx" style="left:506.90px;top:342.10px;font-size:9.5px;line-height:9.5px;color:#333;">.@backup_qbox</div>
<div class="tx" style="left:506.90px;top:362.88px;font-size:9.5px;line-height:9.5px;color:#333;">.@qmonitor</div>
<div class="tx" style="left:506.90px;top:383.66px;font-size:9.5px;line-height:9.5px;color:#333;">.@upload_cache</div>
<div class="tx" style="left:506.90px;top:404.44px;font-size:9.5px;line-height:9.5px;color:#333;">.antivirus</div>
<div class="tx" style="left:506.90px;top:425.22px;font-size:9.5px;line-height:9.5px;color:#333;">.codesigning</div>
<div class="tx" style="left:519.50px;top:452.06px;font-size:9.5px;line-height:9.5px;color:#2a7fe0;">1</div>
<div class="tx" style="left:552.00px;top:452.06px;font-size:9.5px;line-height:9.5px;color:#555;">/1</div>
<div class="tx" style="left:630.00px;top:452.48px;font-size:9px;line-height:9px;color:#444;letter-spacing:-0.338px;">Show</div>
<div class="tx" style="left:665.50px;top:452.06px;font-size:9.5px;line-height:9.5px;color:#2a7fe0;letter-spacing:0.217px;">50</div>
<div class="tx" style="left:698.50px;top:452.06px;font-size:9.5px;line-height:9.5px;color:#444;letter-spacing:-0.148px;">Item(s)</div>
<div class="tx" style="left:782.40px;top:232.26px;font-size:9.5px;line-height:9.5px;color:#666;letter-spacing:-0.110px;">Taken:</div>
<div class="tx" style="left:856.00px;top:225.76px;font-size:9.5px;line-height:9.5px;color:#333;letter-spacing:-0.035px;">2022-06-06</div>
<div class="tx" style="left:856.00px;top:238.16px;font-size:9.5px;line-height:9.5px;color:#333;letter-spacing:-0.028px;">01:00:02</div>
<div class="tx" style="left:782.30px;top:258.76px;font-size:9.5px;line-height:9.5px;color:#666;letter-spacing:0.051px;">Replicated:</div>
<div class="tx" style="left:856.20px;top:258.76px;font-size:9.5px;line-height:9.5px;color:#333;letter-spacing:-0.061px;">No</div>
<div class="tx" style="left:782.30px;top:275.86px;font-size:9.5px;line-height:9.5px;color:#666;letter-spacing:0.090px;">Retention</div>
<div class="tx" style="left:782.30px;top:289.06px;font-size:9.5px;line-height:9.5px;color:#666;">Policy:</div>
<div class="tx" style="left:856.20px;top:282.46px;font-size:9.5px;line-height:9.5px;color:#3b3bdc;letter-spacing:0.143px;text-decoration:underline">Smart Versioning</div>
<div class="tx" style="left:781.70px;top:326.16px;font-size:9.5px;line-height:9.5px;color:#666;letter-spacing:0.245px;">Status:</div>
<div class="tx" style="left:879.10px;top:326.16px;font-size:9.5px;line-height:9.5px;color:#36b526;letter-spacing:-0.278px;">Ready</div>
<div class="tx" style="left:781.70px;top:352.26px;font-size:9.5px;line-height:9.5px;color:#666;letter-spacing:0.055px;">Capacity:</div>
<div class="tx" style="left:856.50px;top:352.26px;font-size:9.5px;line-height:9.5px;color:#333;letter-spacing:-0.129px;">16.35 GB</div>
<div class="tx" style="left:781.70px;top:398.96px;font-size:9.5px;line-height:9.5px;color:#666;letter-spacing:-0.184px;">Description:</div>
<div class="tx" style="left:790.00px;top:417.96px;font-size:9.5px;line-height:9.5px;color:#444;letter-spacing:-0.157px;">No description</div>
<div class="tx" style="left:592.00px;top:504.41px;font-size:10.5px;line-height:10.5px;color:#ffffff;letter-spacing:-0.054px;">Restore</div>
<div class="tx" style="left:711.00px;top:504.41px;font-size:10.5px;line-height:10.5px;color:#ffffff;letter-spacing:-0.224px;">Clone</div>
<div class="tx" style="left:807.50px;top:504.41px;font-size:10.5px;line-height:10.5px;color:#ffffff;letter-spacing:0.019px;">Revert volume snapshot</div>
</body></html>
